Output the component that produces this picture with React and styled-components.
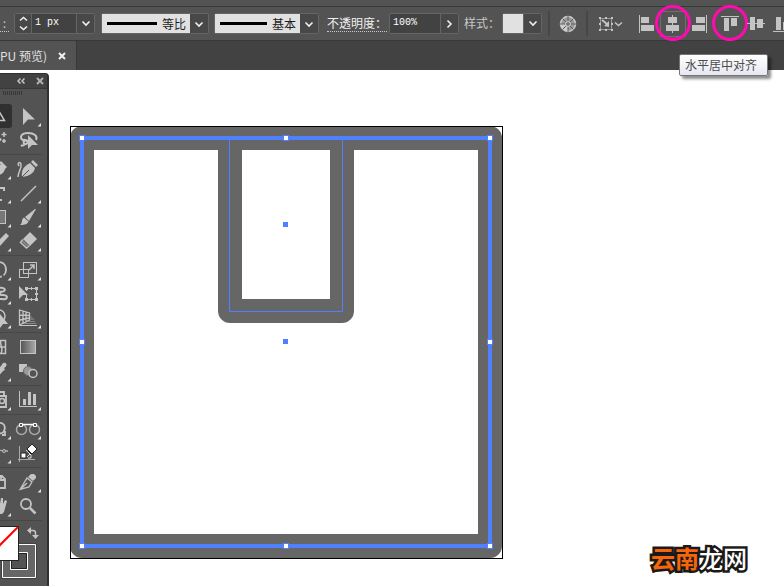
import React from 'react'
import styled, { createGlobalStyle } from 'styled-components'

const GlobalStyle = createGlobalStyle`
  * {
    box-sizing: border-box;
  }
  body {
    margin: 0;
    background: #fff;
    font-family: "Noto Sans CJK SC", sans-serif;
    font-size: 12px;
  }
  button, input, select {
    margin: 0;
    padding: 0;
    border: 0;
    background: none;
    color: inherit;
    font: inherit;
  }
  svg {
    display: block;
  }
`

const Shell = styled.div`
  min-height: 100vh;
  display: flex;
  flex-direction: column;
  position: relative;
  overflow: hidden;
  color: #d6d6d6;
`

const MenuStrip = styled.div`
  height: 7px;
  background: #535353;
  border-bottom: 1px solid #383838;
`

const OptionsBar = styled.header`
  height: 34px;
  display: flex;
  align-items: center;
  background: #535353;
  border-bottom: 1px solid #383838;
  white-space: nowrap;
  > * {
    flex-shrink: 0;
  }
`

const OptionLabel = styled.label`
  line-height: 16px;
  color: ${(p) => (p.$bright ? '#f0f0f0' : '#c8c8c8')};
  border-bottom: 1px ${(p) => (p.$linked ? 'dotted #c8c8c8' : 'solid transparent')};
  width: ${(p) => p.$width}px;
`

const Field = styled.div`
  height: 21px;
  display: flex;
  position: relative;
  border: 1px solid #656565;
  border-radius: 2px;
  background: #424242;
  margin: 0 ${(p) => p.$after || 6}px 0 ${(p) => p.$before || 0}px;
`

const Stepper = styled.div`
  width: 17px;
  display: flex;
  flex-direction: column;
  border-right: 1px solid #656565;
  background: #484848;
  button {
    flex: 1;
    display: grid;
    place-items: center;
  }
`

const ValueInput = styled.input`
  width: ${(p) => p.$width}px;
  padding-left: 3px;
  padding-bottom: 2px;
  font-family: "Liberation Mono", monospace;
  font-size: 10px;
  color: #fff;
  outline: none;
`

const ArrowButton = styled.button`
  width: 18px;
  display: grid;
  place-items: center;
  border-left: 1px solid #656565;
  background: #484848;
`

const StrokeSelect = styled.select`
  width: ${(p) => p.$width}px;
  padding-left: ${(p) => p.$width - 46}px;
  appearance: none;
  color: #1c1c1c;
  background:
    linear-gradient(#000, #000) 5px 8px / ${(p) => p.$line}px 3px no-repeat,
    linear-gradient(#484848, #484848) right / 18px 100% no-repeat,
    #e1e1e1;
  outline: none;
`

const SelectArrow = styled.span`
  position: absolute;
  right: 4px;
  top: 7px;
  pointer-events: none;
`

const Swatch = styled.span`
  width: 20px;
  background: #e1e1e1;
`

const Divider = styled.span`
  width: 2px;
  height: 25px;
  background: #474747;
`

const IconButton = styled.button`
  width: ${(p) => p.$width || 26}px;
  height: 26px;
  display: grid;
  place-items: center;
  position: relative;
  border: 1px solid ${(p) => (p.$active ? '#6e6e6e' : 'transparent')};
  margin-left: ${(p) => p.$before || 0}px;
`

const Ring = styled.span`
  position: absolute;
  left: -6px;
  top: -7px;
  width: 36px;
  height: 36px;
  border: 3px solid #ff0aaf;
  border-radius: 50%;
  pointer-events: none;
`

const Tooltip = styled.span`
  position: absolute;
  z-index: 2;
  left: 18px;
  top: 42px;
  padding: 0 10px 0 5px;
  line-height: 20px;
  color: #4c4c4c;
  background: linear-gradient(#fff, #e6e7f2);
  border: 1px solid #767676;
  border-radius: 2px;
  box-shadow: 3px 3px 3px rgba(0, 0, 0, 0.45);
`

const TabBar = styled.nav`
  height: 29px;
  display: flex;
  background: #424242;
`

const Tab = styled.div`
  display: flex;
  align-items: center;
  gap: 11px;
  padding-right: 10px;
  background: #535353;
  border-right: 1px solid #383838;
  color: #e0e0e0;
`

const Workspace = styled.main`
  flex: 1;
  display: flex;
  align-items: flex-start;
  background: #fff;
`

const Palette = styled.aside`
  width: 49px;
  flex-shrink: 0;
  align-self: stretch;
  margin-top: 3px;
  overflow: hidden;
  background: #535353;
  border-right: 2px solid #303030;
  border-top: 1px solid #303030;
  border-top-right-radius: 4px;
`

const PaletteHead = styled.div`
  height: 15px;
  display: flex;
  justify-content: flex-end;
  align-items: center;
  gap: 11px;
  padding-right: 3px;
  background: #424242;
  border-bottom: 1px solid #383838;
`

const Grip = styled.div`
  width: 20px;
  height: 4px;
  margin: 2px 0 9px 3px;
  background: repeating-linear-gradient(90deg, #383838 0 1px, #535353 1px 2px);
`

const ToolGroup = styled.div`
  display: grid;
  grid-template-columns: 28px 28px;
  grid-auto-rows: 24px;
  column-gap: 2px;
  justify-content: end;
  margin: 0 5px 2px 0;
  padding-bottom: 2px;
  border-bottom: 1px solid #474747;
`

const ToolButton = styled.button`
  border-radius: 3px;
  background: ${(p) => (p.$active ? '#303030' : 'none')};
  color: #c4c4c4;
`

const PaintArea = styled.div`
  padding-top: 3px;
`

const Artboard = styled.section`
  flex-shrink: 0;
  padding: 56px 0 27px 21px;
`

const Watermark = styled.p`
  position: absolute;
  right: 37px;
  bottom: 13px;
  margin: 0;
  font-size: 24px;
  line-height: 32px;
  font-weight: 500;
  color: #fff;
  -webkit-text-stroke: 5px #1c1a18;
  paint-order: stroke fill;
  span {
    font-weight: 700;
    color: #f4650c;
  }
`

const Chevron = ({ d = 'M1.5 1.5L5 5L8.5 1.5', w = 10, h = 7, color = '#f0f0f0' }) => (
  <svg width={w} height={h} fill="none" stroke={color} strokeWidth="1.6">
    <path d={d} />
  </svg>
)

const Cross = ({ color }) => (
  <svg width="8" height="8" stroke={color} strokeWidth="2">
    <path d="M1 1L7 7M7 1L1 7" />
  </svg>
)

// shapes are drawn on a 24x24 grid
const alignIcons = [
  { label: '水平左对齐', d: 'M4 3h1v18h-1zM6 5h8v6h-8zM6 13h13v6h-13z' },
  { label: '水平居中对齐', d: 'M11 3h1v18h-1zM7 5h9v6h-9zM5 13h13v6h-13z', active: true, ring: true },
  { label: '水平右对齐', d: 'M19 3h1v18h-1zM9 5h9v6h-9zM5 13h13v6h-13z' },
  { label: '垂直顶对齐', d: 'M3 4h18v1h-18zM6 6h5v13h-5zM13 6h6v8h-6z', ring: true, before: 5 },
  { label: '垂直居中对齐', d: 'M3 11h18v1h-18zM6 5h5v13h-5zM13 7h6v9h-6z' },
  { label: '垂直底对齐', d: 'M3 19h18v1h-18zM6 5h5v13h-5zM13 10h6v8h-6z' },
]

const Corner = () => <path d="M27 19v3.5h-3.5z" fill="#e0e0e0" stroke="none" />

// each tool icon fills its whole 28x24 cell
const groups = [
  [
    { name: '选择工具', active: true, art: <path d="M13 4V16.500H20.500Z" strokeWidth="1.500" /> },
    { name: '直接选择工具', corner: true, art: <path d="M9 4V21L14 15.500H21Z" fill="currentColor" stroke="none" /> },
    {
      name: '魔棒工具',
      art: <path d="M20 4v5M17.500 6.500h5M16 10v3M14.500 11.500h3M20 11v4M18 13h4M15 13L9 20" strokeWidth="1.500" />,
    },
    {
      name: '套索工具',
      art: (
        <>
          <path d="M14 13C10 11 8 15 11 16C15 17 14 11 9 12C5 10 7 5 14 5C20 5 24 8 22 12M11 16C9 18 8 18 7 17" strokeWidth="2" />
          <path d="M14 7V21L18 17H24Z" fill="currentColor" stroke="none" />
        </>
      ),
    },
  ],
  [
    {
      name: '钢笔工具',
      corner: true,
      art: <path d="M7 20C8 11 11 7 17 8L21 12C20 17 15 19 7 20M17 4L23 10L21 12L15 6Z" fill="currentColor" stroke="none" />,
    },
    {
      name: '曲率工具',
      art: (
        <>
          <path d="M8 20C7 13 10 9 16 6L21 11C20 16 16 19 8 20ZM17 5L19 3L24 8L22 10Z" fill="currentColor" stroke="none" />
          <path d="M8 20L15 13" stroke="#535353" />
          <path d="M4 20C4 15 8 11 7 7C6 4 3 6 5 9" strokeWidth="1.500" />
        </>
      ),
    },
    { name: '文字工具', corner: true, art: <path d="M10 9V7H20V10M15 7V19M12 19H18" strokeWidth="2" /> },
    { name: '直线段工具', corner: true, art: <path d="M7 20L22 5" strokeWidth="1.500" /> },
    { name: '矩形工具', corner: true, art: <rect x="7.500" y="5.500" width="14" height="13" fill="#777" /> },
    {
      name: '画笔工具',
      corner: true,
      art: <path d="M22 4L15 16L11 12L21 4ZM10 12.500L14.500 16.500C13 20 9 20 6 20C9 18 7 14 10 12.500" fill="currentColor" stroke="none" />,
    },
    { name: '铅笔工具', corner: true, art: <path d="M22 4L25 7L15 18L10 19L12 14L20 6Z" fill="currentColor" stroke="none" /> },
    {
      name: '橡皮擦工具',
      corner: true,
      art: (
        <>
          <path d="M16 3L23 10L16 17L9 10Z" fill="currentColor" stroke="none" />
          <path d="M9 10.500L6.500 13.500L12.500 19L15.500 16.500" strokeWidth="1.500" />
          <path d="M8 13L13 18L14.500 16.500L9.500 11.500Z" fill="#888" stroke="none" />
        </>
      ),
    },
  ],
  [
    { name: '旋转工具', corner: true, art: <path d="M15 4C20 4 22 8 22 12C22 16 19 19 15 19" strokeWidth="1.800" strokeDasharray="18 2" /> },
    {
      name: '比例缩放工具',
      corner: true,
      art: (
        <>
          <rect x="9.500" y="4.500" width="13" height="11" />
          <rect x="5.500" y="11.500" width="9" height="8" />
          <path d="M15 12L19 8M16 7H20V11" strokeWidth="1.500" />
        </>
      ),
    },
    { name: '宽度工具', corner: true, art: <path d="M14 7C17 4 23 7 20 9C17 11 17 8 16 11C15 15 22 11 23 15C23 18 19 17 16 17" strokeWidth="2" /> },
    {
      name: '自由变换工具',
      art: (
        <>
          <path d="M5 4V17L9 13H14Z" fill="currentColor" stroke="none" />
          <path d="M12.500 13V17.500H22.500V6.500H12.500V9" />
          <path d="M11 5h3v3h-3zM17 5h1v3h-1zM21 5h3v3h-3zM21 11h3v2h-3zM11 16h3v3h-3zM17 16h1v3h-1zM21 16h3v3h-3z" fill="currentColor" stroke="none" />
        </>
      ),
    },
    {
      name: '形状生成器工具',
      corner: true,
      art: (
        <>
          <circle cx="15" cy="10" r="6" strokeWidth="1.500" />
          <path d="M16 8V22L19 18H24Z" fill="currentColor" stroke="none" />
        </>
      ),
    },
    {
      name: '透视网格工具',
      corner: true,
      art: (
        <>
          <path d="M5.500 4V19L15.500 14V7ZM9 5V17M12 6V16M6 9L15 9.500M6 14L15 12" strokeWidth="1.300" />
          <path d="M16 9L21 14H16Z" fill="#777" stroke="none" />
          <path d="M14 15.500H21" stroke="#888" />
          <path d="M10 17.500H22" stroke="#888" />
          <path d="M6 19.500H23" />
        </>
      ),
    },
  ],
  [
    { name: '网格工具', art: <path d="M10 5.500H21.500V18.500H10M10 12H21M17 5C15 9 20 14 17 18" strokeWidth="1.500" /> },
    { name: '渐变工具', art: <rect x="6.500" y="5.500" width="15" height="13" fill="url(#fade)" /> },
    { name: '吸管工具', corner: true, art: <path d="M19 4C23 3 24 7 20 9L21 11L19 12L13 19H10L15 9L17 7Z" fill="currentColor" stroke="none" /> },
    {
      name: '混合工具',
      art: (
        <>
          <path d="M5 5h8v8h-8z" fill="currentColor" stroke="none" />
          <circle cx="14" cy="12" r="4.500" fill="#999" stroke="#6a6a6a" />
          <circle cx="19" cy="14.500" r="4" fill="#535353" strokeWidth="1.500" />
        </>
      ),
    },
  ],
  [
    {
      name: '符号喷枪工具',
      corner: true,
      art: (
        <>
          <path d="M15 8H22V19H13M16 4H20V8" strokeWidth="1.800" />
          <circle cx="18" cy="13" r="2.500" strokeWidth="1.500" />
        </>
      ),
    },
    {
      name: '柱形图工具',
      corner: true,
      art: <path d="M5 3h1v15h17v1h-18zM9 11h3v6h-3zM14 4h3v13h-3zM19 6h3v11h-3z" fill="currentColor" stroke="none" />,
    },
  ],
  [
    { name: '画板工具', corner: true, art: <path d="M15 6C20 5 22 10 20 14C19 17 15 17 14 15M18 18H21V14" strokeWidth="1.800" /> },
    {
      name: '连接工具',
      corner: true,
      art: (
        <>
          <circle cx="7.500" cy="12.500" r="5" strokeWidth="1.500" stroke="#aaa" />
          <circle cx="20.500" cy="12.500" r="5" strokeWidth="1.500" stroke="#aaa" />
          <path d="M7 7.500H21" stroke="#fff" strokeWidth="1.500" />
          <path d="M5.500 6.500h3v3h-3zM19.500 6.500h3v3h-3z" fill="#535353" stroke="#fff" />
        </>
      ),
    },
    {
      name: '路径工具',
      corner: true,
      art: (
        <>
          <path d="M14 11C16 8 18 10 18 10H24" stroke="#ddd" />
          <circle cx="20" cy="10" r="1.500" fill="#535353" />
        </>
      ),
    },
    {
      name: '路径橡皮擦工具',
      art: (
        <>
          <path d="M5.500 5V21M4 18.500H21" stroke="#aaa" />
          <path d="M7 12h5v5h-5z" fill="#fff" stroke="#222" />
          <path d="M18 3L23 8L18 13L13 8Z" fill="#fff" stroke="#222" />
          <path d="M13 16L16 13M14 17H17V14M12 9L17 14" stroke="#ddd" />
          <path d="M14 10L17 13" stroke="#222" />
        </>
      ),
    },
  ],
  [
    { name: '打印拼贴工具', art: <path d="M12 6H18L21 9V18H12M17 6V10H21" strokeWidth="1.800" /> },
    {
      name: '切片工具',
      corner: true,
      art: (
        <>
          <path d="M6 19.500L13 8L18 12L15 17ZM6 19.500L13 13" strokeWidth="1.300" />
          <path d="M14 7L17 4H20L22 6V8L19 11Z" fill="currentColor" stroke="none" />
        </>
      ),
    },
    {
      name: '抓手工具',
      corner: true,
      art: <path d="M12 5L14 4L16 10L17 4H19L19 10L21 6L23 7L20 18L18 20H12Z" fill="currentColor" stroke="none" />,
    },
    {
      name: '缩放工具',
      art: (
        <>
          <circle cx="12" cy="10" r="5" strokeWidth="1.800" />
          <path d="M16 14L21.500 19.500" strokeWidth="2.500" />
        </>
      ),
    },
  ],
]

const Tools = () => (
  <Palette aria-label="工具">
    <svg width="0" height="0">
      <defs>
        <linearGradient id="fade">
          <stop offset="0" stopColor="#555" />
          <stop offset="1" stopColor="#aaa" />
        </linearGradient>
      </defs>
    </svg>
    <PaletteHead>
      <button aria-label="折叠">
        <svg width="8" height="6" fill="none" stroke="#c4c4c4" strokeWidth="1.5">
          <path d="M3.500 0.500L1 3L3.500 5.500M7.500 0.500L5 3L7.500 5.500" />
        </svg>
      </button>
      <button aria-label="关闭面板"><Cross color="#b0b0b0" /></button>
    </PaletteHead>
    <Grip />
    {groups.map((group) => (
      <ToolGroup key={group[0].name}>
        {group.map((tool) => (
          <ToolButton key={tool.name} aria-label={tool.name} $active={tool.active}>
            <svg width="28" height="24" fill="none" stroke="currentColor">
              {tool.art}
              {tool.corner && <Corner />}
            </svg>
          </ToolButton>
        ))}
      </ToolGroup>
    ))}
    <PaintArea>
      <svg width="47" height="60" fill="none">
        <rect x="1.500" y="17.500" width="35" height="35" fill="#333" />
        <path d="M2.500 18.500h33v33h-33z" fill="#666" stroke="#fff" />
        <path d="M10.500 26.500h17v17h-17z" fill="#535353" stroke="#fff" />
        <path d="M11.500 27.500h15v15h-15z" stroke="#222" />
        <rect x="-16" y="0" width="35" height="35" fill="#222" />
        <rect x="-15" y="1" width="33" height="33" fill="#fff" />
        <path d="M-15 34L18 1" stroke="#f00" strokeWidth="2" />
        <path d="M29 4.500H33Q35.500 4.500 35.500 7V11" stroke="#c4c4c4" strokeWidth="1.500" />
        <path d="M31 1V8L27 4.500ZM32 9H39L35.500 13Z" fill="#c4c4c4" />
      </svg>
    </PaintArea>
  </Palette>
)

const Drawing = () => (
  <svg width="434" height="434" fill="none" role="img" aria-label="画板">
    <rect x="12" y="12" width="408" height="408" stroke="#666" strokeWidth="24" strokeLinejoin="round" />
    <rect x="160" y="12" width="112" height="173" stroke="#666" strokeWidth="24" strokeLinejoin="round" />
    <rect x="0.500" y="0.500" width="432" height="432" stroke="#000" />
    <path d="M159.500 12V185.500H272.500V12" stroke="#4f80ff" />
    <rect x="12" y="12" width="408" height="408" stroke="#4f80ff" strokeWidth="4" />
    {[12, 216, 420].map((x) =>
      [12, 216, 420].map((y) =>
        x === 216 && y === 216 ? null : (
          <rect key={`${x}-${y}`} x={x - 2.5} y={y - 2.5} width="5" height="5" fill="#fff" stroke="#4f80ff" />
        )
      )
    )}
    <path d="M213 96h5v5h-5zM213 213h5v5h-5z" fill="#4f80ff" />
  </svg>
)

const App = () => {
  return (
    <Shell>
      <GlobalStyle />
      <MenuStrip />
      <OptionsBar>
        <OptionLabel $linked $width={9} htmlFor="weight">&nbsp;:</OptionLabel>
        <Field $before={5}>
          <Stepper>
            <button aria-label="增加"><Chevron d="M1 4.500L4.500 1.500L8 4.500" w={9} h={6} /></button>
            <button aria-label="减少"><Chevron d="M1 1.500L4.500 4.500L8 1.500" w={9} h={6} /></button>
          </Stepper>
          <ValueInput id="weight" $width={44} defaultValue="1 px" />
          <ArrowButton aria-label="描边粗细列表"><Chevron /></ArrowButton>
        </Field>
        <Field $after={5}>
          <StrokeSelect aria-label="变量宽度配置文件" $width={106} $line={50}>
            <option>等比</option>
          </StrokeSelect>
          <SelectArrow><Chevron /></SelectArrow>
        </Field>
        <Field $after={8}>
          <StrokeSelect aria-label="画笔定义" $width={103} $line={47}>
            <option>基本</option>
          </StrokeSelect>
          <SelectArrow><Chevron /></SelectArrow>
        </Field>
        <OptionLabel $linked $bright $width={60} htmlFor="opacity">不透明度：</OptionLabel>
        <Field $before={2} $after={5}>
          <ValueInput id="opacity" $width={50} defaultValue="100%" />
          <ArrowButton aria-label="不透明度滑块"><Chevron d="M1.500 1.500L5 5L1.500 8.500" w={7} h={10} /></ArrowButton>
        </Field>
        <OptionLabel as="span" $width={36}>样式：</OptionLabel>
        <Field $before={2}>
          <Swatch />
          <ArrowButton aria-label="图形样式"><Chevron /></ArrowButton>
        </Field>
        <Divider />
        <IconButton aria-label="重新着色图稿" $width={36}>
          <svg width="18" height="18" fill="none">
            <circle cx="9" cy="9" r="7.500" fill="#999" stroke="#c8c8c8" strokeWidth="1.500" />
            <path d="M9 9L1.500 9A7.500 7.500 0 0 0 9 16.500Z" fill="#ccc" />
            <path d="M9 1V17M1 9H17M3.500 3.500L14.500 14.500M14.500 3.500L3.500 14.500" stroke="#5c5c5c" />
            <circle cx="9" cy="9" r="2.500" fill="#777" stroke="#d0d0d0" />
          </svg>
        </IconButton>
        <Divider />
        <IconButton aria-label="选择类似的对象" $width={46}>
          <svg width="24" height="16" fill="none" stroke="#c4c4c4">
            <path d="M1.500 2.500H12.500V13.500H1.500Z" stroke="#999" />
            <path d="M0 1h2v2h-2zM6 1h2v2h-2zM12 1h2v2h-2zM0 13h2v2h-2zM6 13h2v2h-2zM12 13h2v2h-2zM0 7h2v2h-2zM12 7h2v2h-2z" fill="#c4c4c4" stroke="none" />
            <path d="M3 4L8 8" strokeWidth="2" />
            <path d="M5 10L10 5V11Z" fill="#c4c4c4" stroke="none" />
            <path d="M16 6.500L19.500 9.500L23 6.500" strokeWidth="1.500" />
          </svg>
        </IconButton>
        {alignIcons.map((icon) => (
          <IconButton key={icon.label} aria-label={icon.label} $active={icon.active} $before={icon.before}>
            <svg width="24" height="24" fill="#c4c4c4">
              <path d={icon.d} />
            </svg>
            {icon.ring && <Ring />}
            {icon.active && <Tooltip role="tooltip">{icon.label}</Tooltip>}
          </IconButton>
        ))}
      </OptionsBar>
      <TabBar>
        <Tab>
          <span>PU 预览)</span>
          <button aria-label="关闭文档"><Cross color="#f0f0f0" /></button>
        </Tab>
      </TabBar>
      <Workspace>
        <Tools />
        <Artboard>
          <Drawing />
        </Artboard>
      </Workspace>
      <Watermark><span>云南</span>龙网</Watermark>
    </Shell>
  )
}

export default App
